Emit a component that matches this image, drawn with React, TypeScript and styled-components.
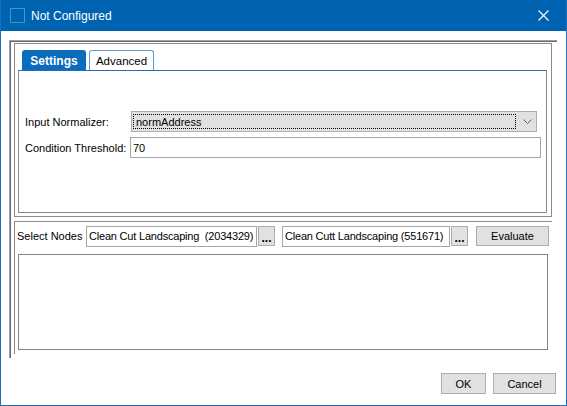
import styled, { createGlobalStyle } from 'styled-components';

const GlobalStyle = createGlobalStyle`
  html, body {
    margin: 0;
    padding: 0;
    background: #ffffff;
  }
  * {
    box-sizing: border-box;
  }
`;

const Window = styled.div`
  width: 567px;
  height: 406px;
  border: 1px solid #1b6fbd;
  border-top: none;
  background: #ffffff;
  font-family: 'Liberation Sans', Arial, sans-serif;
  font-size: 11px;
  color: #000;
  display: flex;
  flex-direction: column;
  overflow: hidden;
`;

const TitleBar = styled.div`
  height: 31px;
  margin: 0 -1px;
  background: #0063b1;
  color: #fff;
  display: flex;
  align-items: center;
  padding-left: 10px;
  gap: 6px;
`;

const TitleText = styled.span`
  font-size: 12px;
  flex: 1;
`;

const CloseButton = styled.div`
  width: 46px;
  height: 31px;
  display: flex;
  align-items: center;
  justify-content: center;
  margin-right: 1px;
`;

const OuterFrame = styled.div`
  margin: 9px 0 0 8px;
  width: 548px;
  height: 318px;
  border-top: 1px solid #a0a0a0;
  border-left: 1px solid #a0a0a0;
  box-shadow: inset 1px 1px 0 #696969;
  padding: 1px 0 0 1px;
  display: flex;
  flex-direction: column;
`;

const TopPanel = styled.div`
  margin: 1px 0 0 3px;
  width: 538px;
  height: 174px;
  border: 1px solid #8a8a8a;
  padding: 6px 0 0 3px;
`;

const TabStrip = styled.div`
  display: flex;
  gap: 3px;
  padding-left: 4px;
  height: 20px;
  align-items: flex-end;
`;

const Tab = styled.div<{ active?: boolean }>`
  height: 20px;
  width: ${(p) => (p.active ? '64px' : '65px')};
  border-radius: 3px 3px 0 0;
  border: 1px solid ${(p) => (p.active ? '#0b6cbc' : '#5a9ad6')};
  border-bottom: none;
  background: ${(p) => (p.active ? '#0b6cbc' : '#ffffff')};
  color: ${(p) => (p.active ? '#fff' : '#000')};
  font-weight: ${(p) => (p.active ? 'bold' : 'normal')};
  font-size: ${(p) => (p.active ? '12px' : '11.5px')};
  display: flex;
  align-items: center;
  justify-content: center;
  padding-top: 1px;
`;

const TabPanel = styled.div`
  width: 529px;
  height: 143px;
  border: 1px solid #8a8a8a;
  border-top: 1px solid #1b6fc0;
  padding: 40px 0 0 6px;
  display: grid;
  grid-template-columns: 105px 1fr;
  grid-auto-rows: 21px;
  row-gap: 5px;
  align-items: center;
  align-content: start;
`;

const FieldLabel = styled.span`
  white-space: nowrap;
`;

const Select = styled.div`
  margin-left: 1px;
  width: 406px;
  height: 21px;
  background: #e1e1e1;
  border: 1px solid #adadad;
  display: flex;
  align-items: center;
  padding: 1px;
`;

const SelectValue = styled.div`
  flex: 1;
  height: 15px;
  border: 1px dotted #000;
  display: flex;
  align-items: center;
  padding-left: 2px;
`;

const Chevron = styled.div`
  width: 19px;
  display: flex;
  align-items: center;
  justify-content: center;
  padding-left: 3px;
`;

const TextInput = styled.div<{ w?: number; gapLeft?: number; tight?: boolean }>`
  width: ${(p) => (p.w ? `${p.w}px` : '411px')};
  margin-left: ${(p) => p.gapLeft ?? 0}px;
  height: 21px;
  border: 1px solid #a6a6a6;
  background: #fff;
  display: flex;
  align-items: center;
  padding-left: 2px;
  white-space: pre;
  overflow: hidden;
  letter-spacing: ${(p) => (p.tight ? '-0.2px' : 'normal')};
`;

const LowerPanel = styled.div`
  margin: 4px 0 0 3px;
  width: 538px;
  height: 133px;
  border-top: 1px solid #8a8a8a;
  border-left: 1px solid #8a8a8a;
  padding: 4px 0 0 2px;
`;

const NodeRow = styled.div`
  display: flex;
  align-items: center;
  height: 20px;
`;

const RowLabel = styled.span`
  width: 69px;
  white-space: nowrap;
`;

const Button = styled.div<{ w: number; gapLeft?: number }>`
  width: ${(p) => p.w}px;
  height: 20px;
  margin-left: ${(p) => p.gapLeft ?? 0}px;
  background: #e1e1e1;
  border: 1px solid #adadad;
  display: flex;
  align-items: center;
  justify-content: center;
  white-space: nowrap;
`;

const Dots = styled.span`
  font-weight: bold;
  font-size: 12px;
  margin-top: 3px;
`;

const ResultBox = styled.div`
  margin: 8px 0 0 1px;
  width: 530px;
  height: 96px;
  border: 1px solid #828282;
  background: #fff;
`;

const Footer = styled.div`
  margin-top: 15px;
  display: flex;
  justify-content: flex-end;
  gap: 7px;
  padding-right: 10px;
`;

const DialogButton = styled(Button)`
  height: 21px;
`;

function App() {
  return (
    <>
      <GlobalStyle />
      <Window>
        <TitleBar>
          <svg width="15" height="15" viewBox="0 0 15 15">
            <rect x="0.5" y="0.5" width="14" height="14" fill="none" stroke="#2aa6b8" strokeWidth="1" />
          </svg>
          <TitleText>Not Configured</TitleText>
          <CloseButton>
            <svg width="11" height="11" viewBox="0 0 11 11">
              <path d="M0.5 0.5 L10.5 10.5 M10.5 0.5 L0.5 10.5" stroke="#fff" strokeWidth="1.1" />
            </svg>
          </CloseButton>
        </TitleBar>

        <OuterFrame>
          <TopPanel>
            <TabStrip>
              <Tab active>Settings</Tab>
              <Tab>Advanced</Tab>
            </TabStrip>
            <TabPanel>
              <FieldLabel>Input Normalizer:</FieldLabel>
              <Select>
                <SelectValue>normAddress</SelectValue>
                <Chevron>
                  <svg width="9" height="5" viewBox="0 0 9 5">
                    <path d="M0.5 0.5 L4.5 4.5 L8.5 0.5" fill="none" stroke="#606060" strokeWidth="1" />
                  </svg>
                </Chevron>
              </Select>
              <FieldLabel>Condition Threshold:</FieldLabel>
              <TextInput>70</TextInput>
            </TabPanel>
          </TopPanel>

          <LowerPanel>
            <NodeRow>
              <RowLabel>Select Nodes</RowLabel>
              <TextInput w={171} tight>Clean Cut Landscaping  (2034329)</TextInput>
              <Button w={17} gapLeft={1}><Dots>...</Dots></Button>
              <TextInput w={168} gapLeft={7} tight>Clean Cutt Landscaping (551671)</TextInput>
              <Button w={17} gapLeft={1}><Dots>...</Dots></Button>
              <Button w={73} gapLeft={8}>Evaluate</Button>
            </NodeRow>
            <ResultBox />
          </LowerPanel>
        </OuterFrame>

        <Footer>
          <DialogButton w={45}>OK</DialogButton>
          <DialogButton w={63}>Cancel</DialogButton>
        </Footer>
      </Window>
    </>
  );
}

export default App;
